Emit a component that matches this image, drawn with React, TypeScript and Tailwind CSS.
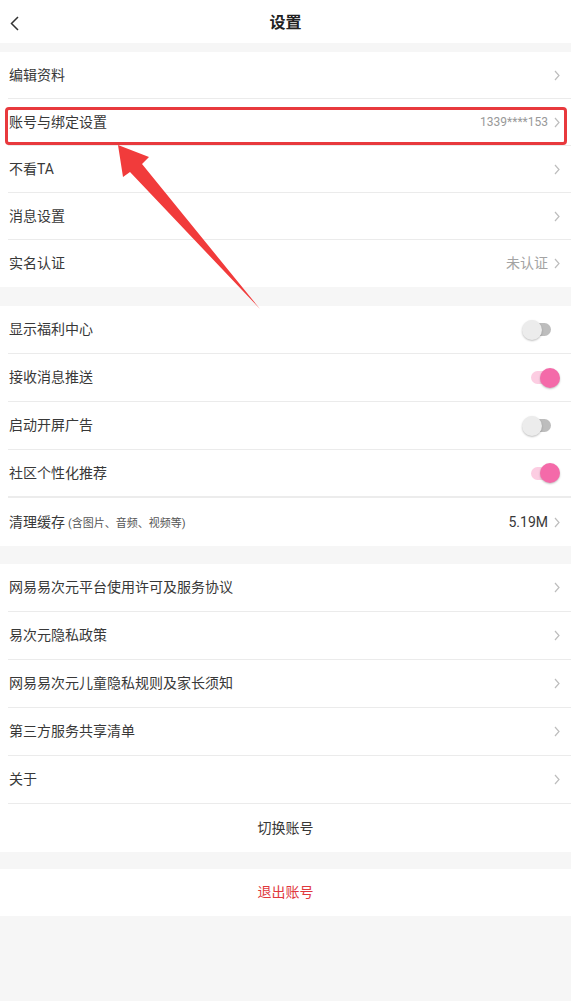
import React from "react";

const font = { fontFamily: 'Roboto, "Noto Sans CJK SC", "Noto Sans", sans-serif' };

function Chevron() {
  return (
    <svg width="6" height="11" viewBox="0 0 6 11" className="shrink-0">
      <polyline points="1,1 5,5.5 1,10" fill="none" stroke="#bdbdbd" strokeWidth="1.2" />
    </svg>
  );
}

function Toggle({ on }: { on: boolean }) {
  return (
    <div className="relative w-[38px] h-[20px] shrink-0">
      <div
        className={
          on
            ? "absolute left-[9px] top-[3.5px] w-[21px] h-[13px] rounded-full bg-[#fccde2]"
            : "absolute left-[8px] top-[3.5px] w-[21px] h-[13px] rounded-full bg-[#bdbdbd]"
        }
      />
      <div
        className={
          on
            ? "absolute left-[18px] top-0 w-[20px] h-[20px] rounded-full bg-[#f46aa9] shadow-[0_1px_2px_rgba(0,0,0,0.25)]"
            : "absolute left-0 top-0 w-[20px] h-[20px] rounded-full bg-[#ececec] shadow-[0_1px_2px_rgba(0,0,0,0.25)]"
        }
      />
    </div>
  );
}

interface RowProps {
  label: React.ReactNode;
  right?: React.ReactNode;
  tall?: boolean;
  last?: boolean;
  thick?: boolean;
}

function Row({ label, right, tall, last, thick }: RowProps) {
  const h = tall ? "h-[48px]" : "h-[47px]";
  const border = last ? "" : thick ? "border-b-2 border-[#ececec]" : "border-b border-[#ebebeb]";
  return (
    <div className={`ml-2 ${h} ${border} flex items-center justify-between pl-px pr-[11px]`}>
      <div className="text-[14px] text-[#383838]">{label}</div>
      <div className="flex items-center gap-[6px]">{right ?? <Chevron />}</div>
    </div>
  );
}

export default function App() {
  return (
    <div className="relative w-full min-h-[1001px] bg-[#f6f6f6]" style={font}>
      {/* header */}
      <div className="h-[43px] pt-[3px] bg-white grid grid-cols-[60px_1fr_60px] items-center">
        <div className="pl-[10px] flex items-center">
          <svg width="9" height="15" viewBox="0 0 9 15">
            <polyline points="8,1 1.5,7.5 8,14" fill="none" stroke="#333" strokeWidth="1.5" />
          </svg>
        </div>
        <div className="text-center text-[16px] font-bold text-[#222]">设置</div>
        <div />
      </div>

      <div className="h-[9px]" />

      {/* section 1 */}
      <div className="bg-white">
        <Row label="编辑资料" />
        <div className="relative">
          <Row
            label="账号与绑定设置"
            right={
              <>
                <span className="text-[12px] text-[#999]">1339****153</span>
                <Chevron />
              </>
            }
          />
          <div className="absolute left-[5px] right-[4px] top-[8px] bottom-[1px] border-[3px] border-[#e8393d] rounded-[4px]" />
        </div>
        <Row label="不看TA" />
        <Row label="消息设置" />
        <Row
          label="实名认证"
          last
          right={
            <>
              <span className="text-[14px] text-[#a3a3a3]">未认证</span>
              <Chevron />
            </>
          }
        />
      </div>

      <div className="h-[19px]" />

      {/* section 2 */}
      <div className="bg-white">
        <Row tall label="显示福利中心" right={<Toggle on={false} />} />
        <Row tall label="接收消息推送" right={<Toggle on />} />
        <Row tall label="启动开屏广告" right={<Toggle on={false} />} />
        <Row tall thick label="社区个性化推荐" right={<Toggle on />} />
        <Row
          tall
          last
          label={
            <span>
              清理缓存<span className="text-[11px] text-[#555] ml-[3px]">(含图片、音频、视频等)</span>
            </span>
          }
          right={
            <>
              <span className="text-[14px] text-[#383838]">5.19M</span>
              <Chevron />
            </>
          }
        />
      </div>

      <div className="h-[18px]" />

      {/* section 3 */}
      <div className="bg-white">
        <Row tall label="网易易次元平台使用许可及服务协议" />
        <Row tall label="易次元隐私政策" />
        <Row tall label="网易易次元儿童隐私规则及家长须知" />
        <Row tall label="第三方服务共享清单" />
        <Row tall label="关于" />
        <div className="h-[48px] flex items-center justify-center text-[14px] text-[#383838]">切换账号</div>
      </div>

      <div className="h-[17px]" />

      <div className="bg-white h-[47px] flex items-center justify-center text-[14px] text-[#e0393e]">退出账号</div>

      {/* annotation arrow */}
      <svg className="absolute left-0 top-0 pointer-events-none" width="571" height="1001" viewBox="0 0 571 1001">
        <polygon points="118,145 149,157 142,164 260,309 130,172 123,177" fill="#f13b3b" />
      </svg>
    </div>
  );
}
